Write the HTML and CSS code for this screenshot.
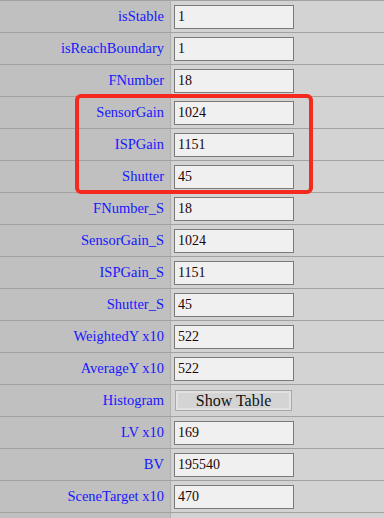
FILE: index.html
```html
<!DOCTYPE html>
<html>
<head>
<meta charset="utf-8">
<link rel="stylesheet" href="styles.css">
</head>
<body>
<div class="wrap">
<table class="grid">
<tr><td class="lbl">isStable</td><td class="val"><input class="field" value="1"></td></tr>
<tr><td class="lbl">isReachBoundary</td><td class="val"><input class="field" value="1"></td></tr>
<tr><td class="lbl">FNumber</td><td class="val"><input class="field" value="18"></td></tr>
<tr><td class="lbl">SensorGain</td><td class="val"><input class="field" value="1024"></td></tr>
<tr><td class="lbl">ISPGain</td><td class="val"><input class="field" value="1151"></td></tr>
<tr><td class="lbl">Shutter</td><td class="val"><input class="field" value="45"></td></tr>
<tr><td class="lbl">FNumber_S</td><td class="val"><input class="field" value="18"></td></tr>
<tr><td class="lbl">SensorGain_S</td><td class="val"><input class="field" value="1024"></td></tr>
<tr><td class="lbl">ISPGain_S</td><td class="val"><input class="field" value="1151"></td></tr>
<tr><td class="lbl">Shutter_S</td><td class="val"><input class="field" value="45"></td></tr>
<tr><td class="lbl">WeightedY x10</td><td class="val"><input class="field" value="522"></td></tr>
<tr><td class="lbl">AverageY x10</td><td class="val"><input class="field" value="522"></td></tr>
<tr><td class="lbl">Histogram</td><td class="val"><button class="btn">Show Table</button></td></tr>
<tr><td class="lbl">LV x10</td><td class="val"><input class="field" value="169"></td></tr>
<tr><td class="lbl">BV</td><td class="val"><input class="field" value="195540"></td></tr>
<tr><td class="lbl">SceneTarget x10</td><td class="val"><input class="field" value="470"></td></tr>
<tr class="tail"><td class="lbl"></td><td class="val"></td></tr>
</table>
<div class="highlight"></div>
</div>
</body>
</html>
```
FILE: styles.css
```css
html, body {
  margin: 0;
  padding: 0;
  background: #d3d3d3;
  overflow: hidden;
}
.wrap {
  position: relative;
  width: 384px;
  height: 518px;
  overflow: hidden;
}
.grid {
  border-collapse: collapse;
  width: 384px;
  font-family: "Liberation Serif", "Times New Roman", serif;
  border-top: 1px solid #a2a2a2;
}
.grid tr {
  height: 32px;
}
.grid tr.tail {
  height: 5px;
}
.grid td {
  padding: 0;
  border-bottom: 1px solid #a2a2a2;
}
.grid tr.tail td {
  border-bottom: 0;
}
.lbl {
  width: 164px;
  background: #c0c0c0;
  color: #1717ff;
  font-size: 14.5px;
  text-align: right;
  padding-right: 6px !important;
  border-right: 1px solid #b0b0b0;
  vertical-align: middle;
}
.val {
  background: #d3d3d3;
  padding-left: 3px !important;
  vertical-align: middle;
}
.field {
  display: block;
  box-sizing: border-box;
  width: 120px;
  height: 24px;
  margin: 0;
  padding: 0 0 0 3px;
  border: 1px solid #7a7a7a;
  background: #f0f0f0;
  font-family: "Liberation Serif", "Times New Roman", serif;
  font-size: 14px;
  color: #1a0505;
}
.btn {
  display: block;
  box-sizing: border-box;
  width: 117px;
  height: 21px;
  margin: 0 0 0 1px;
  padding: 0;
  border: 1px solid #a8a8a8;
  box-shadow: inset 0 0 0 2px #e2e2e2;
  background: #d4d4d4;
  font-family: "Liberation Serif", "Times New Roman", serif;
  font-size: 16px;
  line-height: 19px;
  color: #111;
}
.highlight {
  position: absolute;
  left: 75px;
  top: 94px;
  width: 238px;
  height: 100px;
  box-sizing: border-box;
  border: 4px solid #f42a1e;
  border-radius: 6px;
}
```
